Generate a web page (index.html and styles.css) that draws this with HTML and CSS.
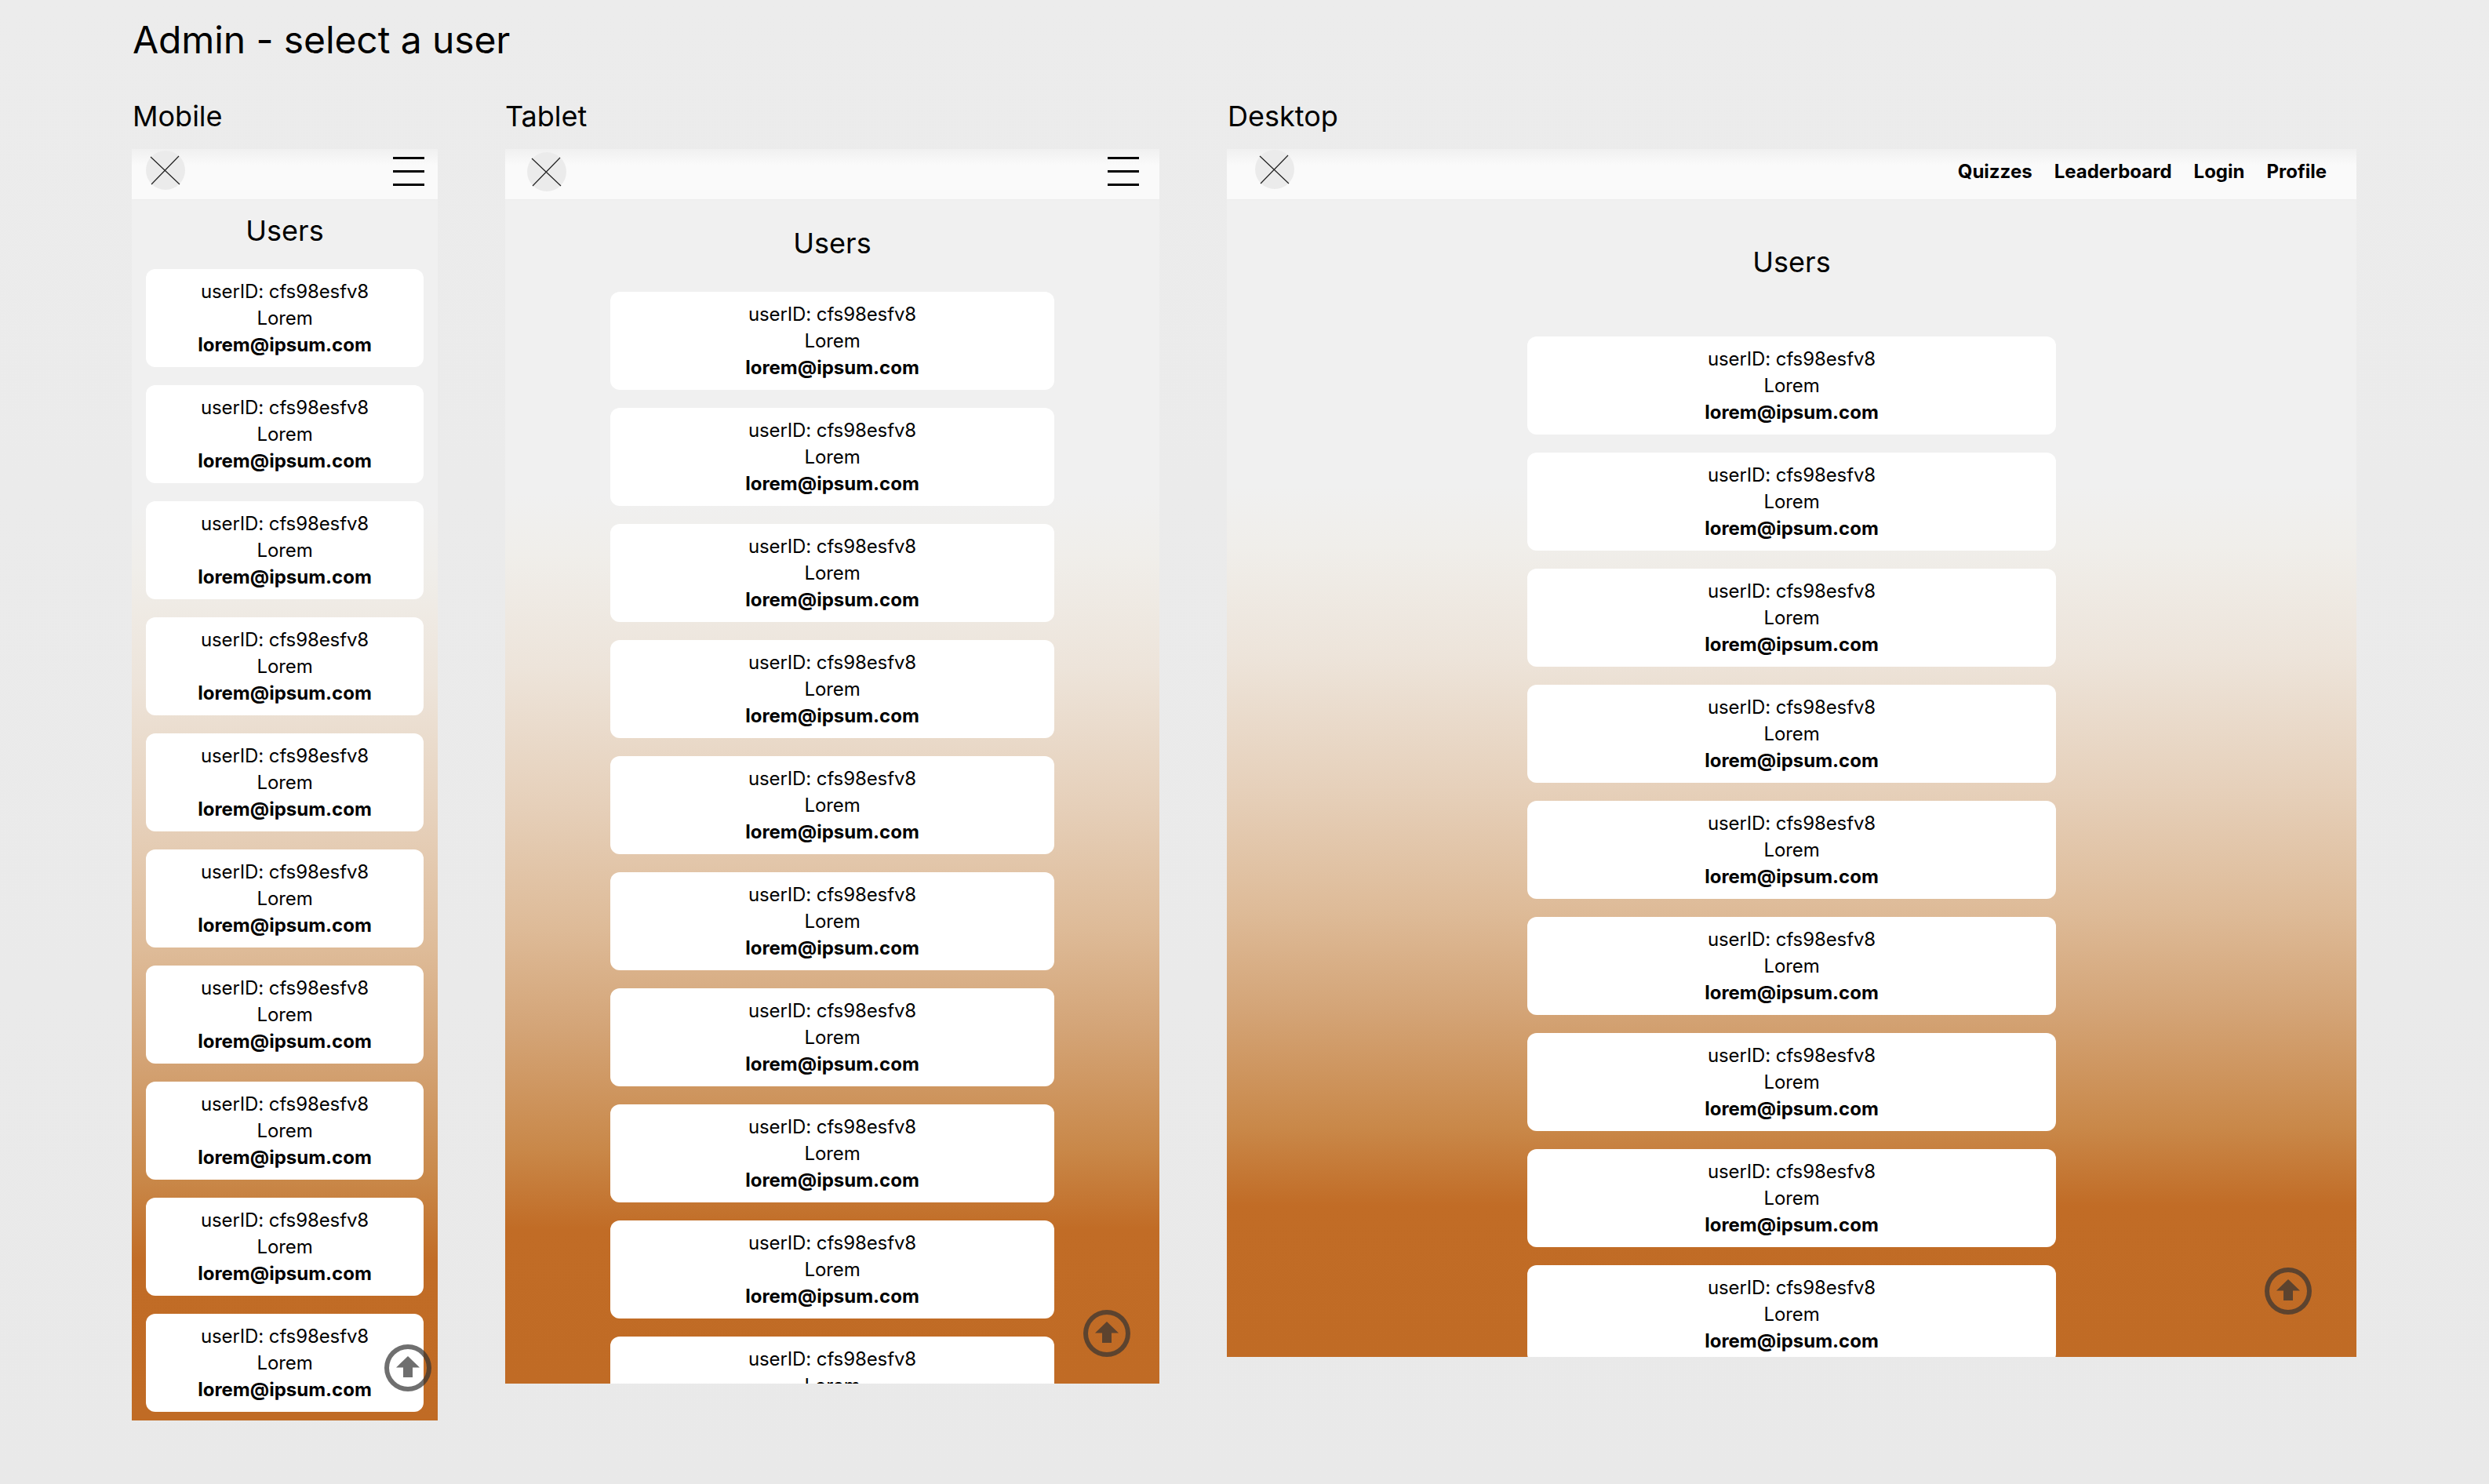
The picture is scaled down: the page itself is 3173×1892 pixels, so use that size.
FILE: index.html
```html
<!DOCTYPE html>
<html lang="en">
<head>
<meta charset="utf-8">
<title>Admin - select a user</title>
<link rel="stylesheet" href="styles.css">
</head>
<body>
<main class="page">
  <h1 class="page-title">Admin - select a user</h1>
  <div class="columns">

    <section class="col col-mobile">
      <h2 class="col-label">Mobile</h2>
      <div class="frame frame-mobile">
        <header class="nav">
          <span class="logo logo-mobile"><svg viewBox="0 0 50 50"><circle cx="25" cy="25" r="25" fill="#ebebeb"/><path d="M6 8 43 43M42 7 7 43" stroke="#222" stroke-width="1.2" fill="none"/></svg></span>
          <span class="burger"><i></i><i></i><i></i></span>
        </header>
        <div class="content">
          <h3 class="users-title">Users</h3>
          <ul class="cards">
            <li class="card"><span>userID: cfs98esfv8</span><span>Lorem</span><b>lorem@ipsum.com</b></li>
            <li class="card"><span>userID: cfs98esfv8</span><span>Lorem</span><b>lorem@ipsum.com</b></li>
            <li class="card"><span>userID: cfs98esfv8</span><span>Lorem</span><b>lorem@ipsum.com</b></li>
            <li class="card"><span>userID: cfs98esfv8</span><span>Lorem</span><b>lorem@ipsum.com</b></li>
            <li class="card"><span>userID: cfs98esfv8</span><span>Lorem</span><b>lorem@ipsum.com</b></li>
            <li class="card"><span>userID: cfs98esfv8</span><span>Lorem</span><b>lorem@ipsum.com</b></li>
            <li class="card"><span>userID: cfs98esfv8</span><span>Lorem</span><b>lorem@ipsum.com</b></li>
            <li class="card"><span>userID: cfs98esfv8</span><span>Lorem</span><b>lorem@ipsum.com</b></li>
            <li class="card"><span>userID: cfs98esfv8</span><span>Lorem</span><b>lorem@ipsum.com</b></li>
            <li class="card"><span>userID: cfs98esfv8</span><span>Lorem</span><b>lorem@ipsum.com</b></li>
          </ul>
        </div>
        <span class="to-top"><svg viewBox="0 0 60 60"><path fill-rule="evenodd" d="M30 0a30 30 0 1 0 0 60a30 30 0 1 0 0-60ZM30 6a24 24 0 1 1 0 48a24 24 0 1 1 0-48ZM30 15 45 29.5H36V42H24V29.5H15Z"/></svg></span>
      </div>
    </section>

    <section class="col col-tablet">
      <h2 class="col-label">Tablet</h2>
      <div class="frame frame-tablet">
        <header class="nav">
          <span class="logo logo-tablet"><svg viewBox="0 0 50 50"><circle cx="25" cy="25" r="25" fill="#ebebeb"/><path d="M6 8 43 43M42 7 7 43" stroke="#222" stroke-width="1.2" fill="none"/></svg></span>
          <span class="burger"><i></i><i></i><i></i></span>
        </header>
        <div class="content">
          <h3 class="users-title">Users</h3>
          <ul class="cards">
            <li class="card"><span>userID: cfs98esfv8</span><span>Lorem</span><b>lorem@ipsum.com</b></li>
            <li class="card"><span>userID: cfs98esfv8</span><span>Lorem</span><b>lorem@ipsum.com</b></li>
            <li class="card"><span>userID: cfs98esfv8</span><span>Lorem</span><b>lorem@ipsum.com</b></li>
            <li class="card"><span>userID: cfs98esfv8</span><span>Lorem</span><b>lorem@ipsum.com</b></li>
            <li class="card"><span>userID: cfs98esfv8</span><span>Lorem</span><b>lorem@ipsum.com</b></li>
            <li class="card"><span>userID: cfs98esfv8</span><span>Lorem</span><b>lorem@ipsum.com</b></li>
            <li class="card"><span>userID: cfs98esfv8</span><span>Lorem</span><b>lorem@ipsum.com</b></li>
            <li class="card"><span>userID: cfs98esfv8</span><span>Lorem</span><b>lorem@ipsum.com</b></li>
            <li class="card"><span>userID: cfs98esfv8</span><span>Lorem</span><b>lorem@ipsum.com</b></li>
            <li class="card"><span>userID: cfs98esfv8</span><span>Lorem</span><b>lorem@ipsum.com</b></li>
          </ul>
        </div>
        <span class="to-top"><svg viewBox="0 0 60 60"><path fill-rule="evenodd" d="M30 0a30 30 0 1 0 0 60a30 30 0 1 0 0-60ZM30 6a24 24 0 1 1 0 48a24 24 0 1 1 0-48ZM30 15 45 29.5H36V42H24V29.5H15Z"/></svg></span>
      </div>
    </section>

    <section class="col col-desktop">
      <h2 class="col-label">Desktop</h2>
      <div class="frame frame-desktop">
        <header class="nav">
          <span class="logo logo-desktop"><svg viewBox="0 0 50 50"><circle cx="25" cy="25" r="25" fill="#ebebeb"/><path d="M6 8 43 43M42 7 7 43" stroke="#222" stroke-width="1.2" fill="none"/></svg></span>
          <nav class="links"><a>Quizzes</a><a>Leaderboard</a><a>Login</a><a>Profile</a></nav>
        </header>
        <div class="content">
          <h3 class="users-title">Users</h3>
          <ul class="cards">
            <li class="card"><span>userID: cfs98esfv8</span><span>Lorem</span><b>lorem@ipsum.com</b></li>
            <li class="card"><span>userID: cfs98esfv8</span><span>Lorem</span><b>lorem@ipsum.com</b></li>
            <li class="card"><span>userID: cfs98esfv8</span><span>Lorem</span><b>lorem@ipsum.com</b></li>
            <li class="card"><span>userID: cfs98esfv8</span><span>Lorem</span><b>lorem@ipsum.com</b></li>
            <li class="card"><span>userID: cfs98esfv8</span><span>Lorem</span><b>lorem@ipsum.com</b></li>
            <li class="card"><span>userID: cfs98esfv8</span><span>Lorem</span><b>lorem@ipsum.com</b></li>
            <li class="card"><span>userID: cfs98esfv8</span><span>Lorem</span><b>lorem@ipsum.com</b></li>
            <li class="card"><span>userID: cfs98esfv8</span><span>Lorem</span><b>lorem@ipsum.com</b></li>
            <li class="card"><span>userID: cfs98esfv8</span><span>Lorem</span><b>lorem@ipsum.com</b></li>
          </ul>
        </div>
        <span class="to-top"><svg viewBox="0 0 60 60"><path fill-rule="evenodd" d="M30 0a30 30 0 1 0 0 60a30 30 0 1 0 0-60ZM30 6a24 24 0 1 1 0 48a24 24 0 1 1 0-48ZM30 15 45 29.5H36V42H24V29.5H15Z"/></svg></span>
      </div>
    </section>

  </div>
</main>
</body>
</html>
```
FILE: styles.css
```css
* { box-sizing: border-box; }
html, body { margin: 0; padding: 0; }
body {
  background: linear-gradient(180deg, #ececec 0%, #e9e9e9 100%);
  color: #000;
  font-family: Inter, "Liberation Sans", sans-serif;
  font-weight: 400;
  height: 1892px;
  overflow: hidden;
}
.page { padding: 22px 0 0 168px; }
.page-title {
  margin: 0 0 46px 1px;
  font-size: 48px;
  line-height: 58px;
  font-weight: 400;
  letter-spacing: -0.1px;
}
.columns { display: flex; align-items: flex-start; }
.col-mobile { width: 390px; margin-right: 86px; }
.col-tablet { width: 834px; margin-right: 86px; }
.col-desktop { width: 1440px; }
.col-label {
  margin: 0 0 20px 1px;
  font-size: 36px;
  line-height: 44px;
  font-weight: 400;
}
.col-tablet .col-label { margin-left: 0; }
.frame {
  position: relative;
  overflow: hidden;
  background: linear-gradient(180deg, #f0f0f0 0%, #f0f0f0 28%, #f0eeea 33%, #ede4da 42%, #e6d0ba 53%, #debb98 63%, #d4a578 71%, #c98849 81%, #c16c26 87.5%, #c06b25 100%);
}
.frame-mobile { height: 1621px; }
.frame-tablet { height: 1574px; }
.frame-desktop { height: 1540px; }
.nav {
  height: 64px;
  display: flex;
  align-items: center;
  justify-content: space-between;
  background: linear-gradient(180deg, #f0f0f0 0%, #fafafa 32%, #fafafa 100%);
  box-shadow: 0 1px 3px rgba(0, 0, 0, 0.02);
}
.logo { display: block; width: 50px; height: 50px; }
.logo svg { display: block; width: 50px; height: 50px; }
.logo-mobile { margin: 2px 0 12px 18px; }
.logo-tablet { margin: 4px 0 10px 28px; }
.logo-desktop { margin: 1px 0 13px 36px; }
.burger {
  display: flex;
  flex-direction: column;
  gap: 14px;
  width: 40px;
  margin-bottom: 8px;
}
.burger i { display: block; height: 3px; background: #000; }
.frame-mobile .burger { margin-right: 17px; }
.frame-tablet .burger { margin-right: 26px; }
.links {
  display: flex;
  gap: 28px;
  margin-right: 38px;
  margin-bottom: 7px;
  font-size: 24px;
  line-height: 34px;
  font-weight: 700;
}
.content { display: flex; flex-direction: column; align-items: center; }
.users-title {
  margin: 0;
  font-size: 36px;
  line-height: 44px;
  font-weight: 400;
  text-align: center;
}
.frame-mobile .users-title { padding-top: 18px; margin-bottom: 27px; }
.frame-tablet .users-title { padding-top: 34px; margin-bottom: 40px; }
.frame-desktop .users-title { padding-top: 58px; margin-bottom: 73px; }
.cards {
  list-style: none;
  margin: 0;
  padding: 0;
  display: flex;
  flex-direction: column;
  gap: 23px;
}
.frame-mobile .cards { width: 354px; }
.frame-tablet .cards { width: 566px; }
.frame-desktop .cards { width: 674px; }
.card {
  height: 125px;
  padding-top: 12px;
  flex: none;
  display: flex;
  flex-direction: column;
  align-items: center;
  background: #fff;
  border-radius: 12px;
  font-size: 24px;
  line-height: 34px;
  font-weight: 400;
}
.card span { letter-spacing: -0.1px; }
.card b { font-weight: 700; }
.to-top {
  position: absolute;
  width: 60px;
  height: 60px;
  opacity: 0.7;
}
.to-top svg { display: block; width: 60px; height: 60px; fill: #333; }
.frame-mobile .to-top { right: 8px; bottom: 37px; }
.frame-tablet .to-top { right: 37px; bottom: 34px; }
.frame-desktop .to-top { right: 57px; bottom: 54px; }
```
